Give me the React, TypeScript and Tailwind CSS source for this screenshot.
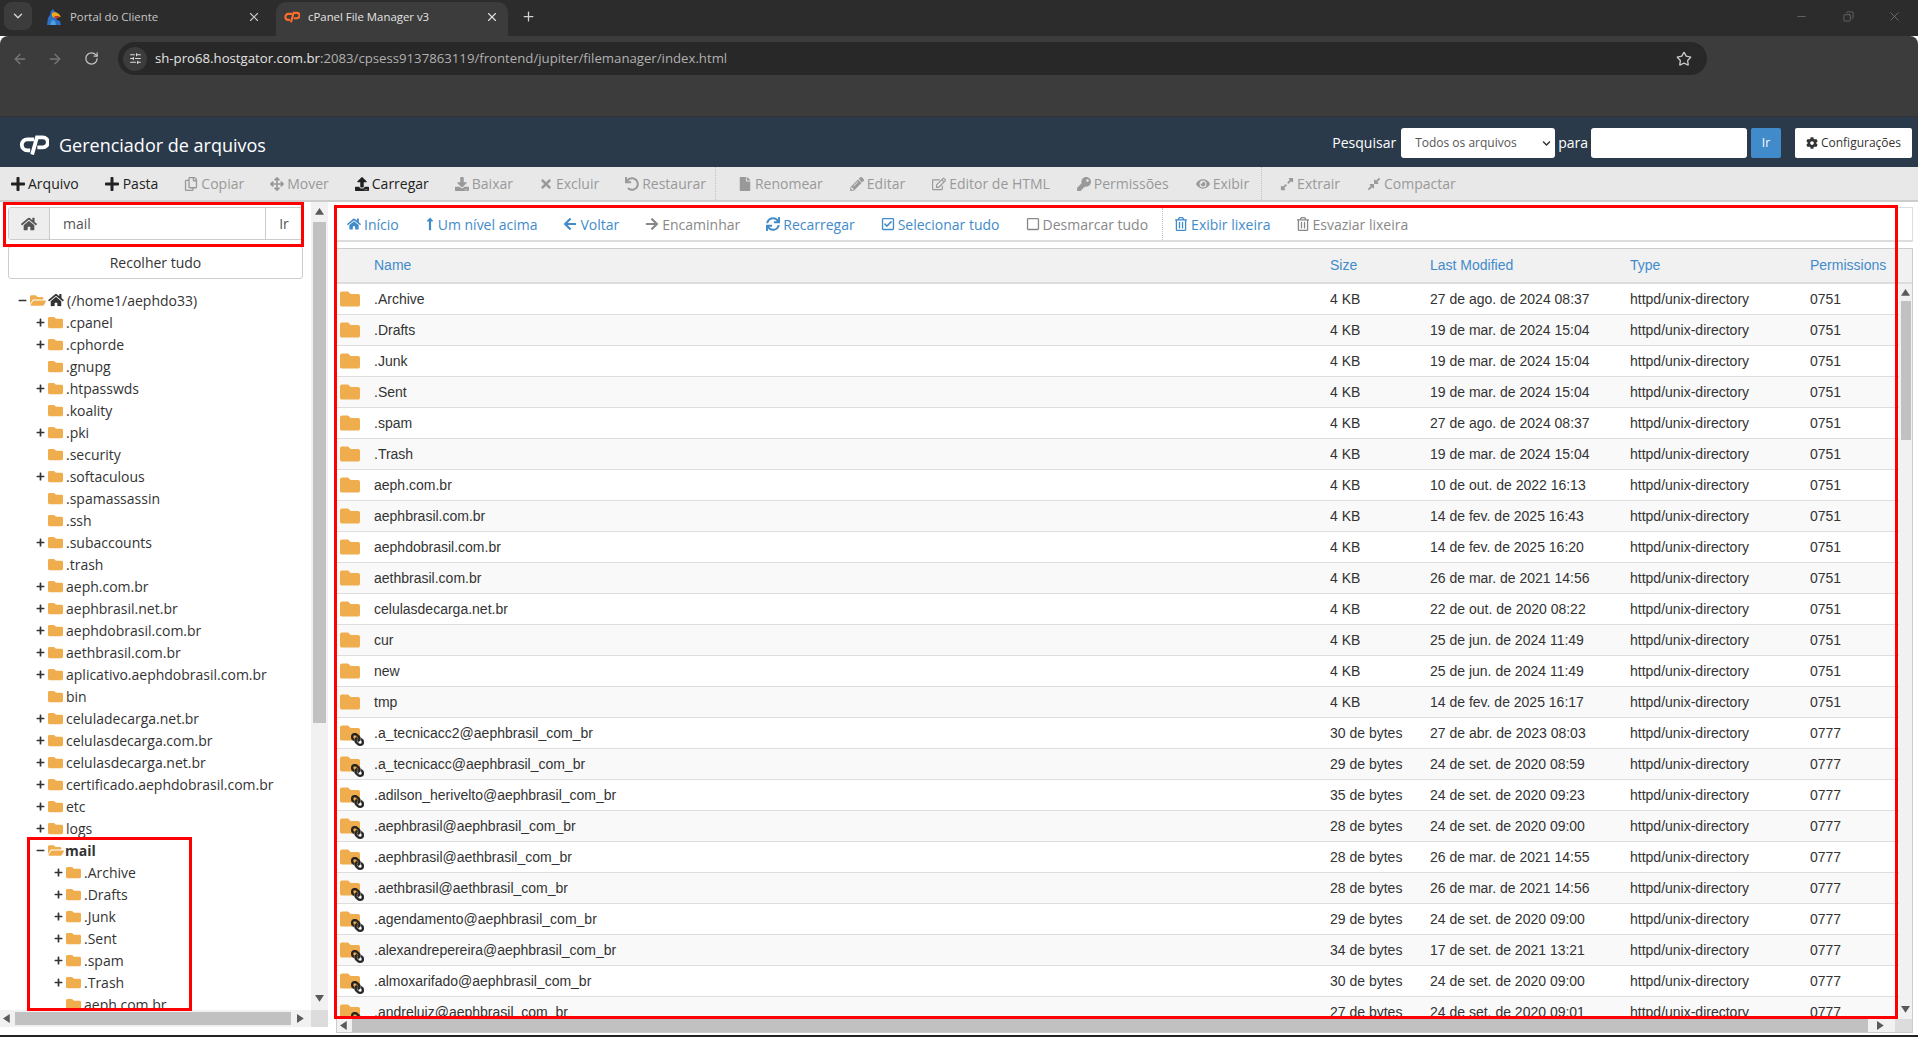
import React from "react";
import {
  FaHome, FaPlus, FaRegCopy, FaArrowsAlt, FaUpload, FaDownload, FaTimes, FaUndo, FaFile, FaPencilAlt, FaRegEdit, FaKey, FaEye,
  FaExpandAlt, FaCompressAlt, FaLongArrowAltUp, FaArrowLeft, FaArrowRight, FaSync, FaRegCheckSquare, FaRegSquare, FaRegTrashAlt,
  FaCog, FaFolder, FaFolderOpen, FaLink, FaMinus, FaChevronDown,
} from "react-icons/fa";
import { ArrowLeft, ArrowRight, RotateCw, Star, X, Plus, Minus, ChevronDown, Copy, SlidersHorizontal } from "lucide-react";

type Ic = React.ComponentType<{ className?: string }>;

const ICON = "w-[14px] h-[14px]";
const PLUS = "w-[16px] h-[16px] -mx-[1px]";

const top1: [Ic, string, boolean, string][] = [
  [FaPlus, "Arquivo", true, PLUS],
  [FaPlus, "Pasta", true, PLUS],
  [FaRegCopy, "Copiar", false, ICON],
  [FaArrowsAlt, "Mover", false, ICON],
  [FaUpload, "Carregar", true, ICON],
  [FaDownload, "Baixar", false, ICON],
  [FaTimes, "Excluir", false, ICON],
  [FaUndo, "Restaurar", false, ICON],
];
const top2: [Ic, string, boolean, string][] = [
  [FaFile, "Renomear", false, ICON],
  [FaPencilAlt, "Editar", false, ICON],
  [FaRegEdit, "Editor de HTML", false, ICON],
  [FaKey, "Permissões", false, ICON],
  [FaEye, "Exibir", false, ICON],
];
const top3: [Ic, string, boolean, string][] = [
  [FaExpandAlt, "Extrair", false, ICON],
  [FaCompressAlt, "Compactar", false, ICON],
];

const nav1: [Ic, string, boolean, string][] = [
  [FaHome, "Início", true, "w-[14px]"],
  [FaLongArrowAltUp, "Um nível acima", true, "w-[10px]"],
  [FaArrowLeft, "Voltar", true, "w-[14px]"],
  [FaArrowRight, "Encaminhar", false, "w-[14px]"],
  [FaSync, "Recarregar", true, "w-[14px]"],
  [FaRegCheckSquare, "Selecionar tudo", true, "w-[14px]"],
  [FaRegSquare, "Desmarcar tudo", false, "w-[14px]"],
];
const nav2: [Ic, string, boolean, string][] = [
  [FaRegTrashAlt, "Exibir lixeira", true, "w-[14px]"],
  [FaRegTrashAlt, "Esvaziar lixeira", false, "w-[14px]"],
];

const tree: [number, boolean, string][] = [
  [1, true, ".cpanel"],
  [1, true, ".cphorde"],
  [1, false, ".gnupg"],
  [1, true, ".htpasswds"],
  [1, false, ".koality"],
  [1, true, ".pki"],
  [1, false, ".security"],
  [1, true, ".softaculous"],
  [1, false, ".spamassassin"],
  [1, false, ".ssh"],
  [1, true, ".subaccounts"],
  [1, false, ".trash"],
  [1, true, "aeph.com.br"],
  [1, true, "aephbrasil.net.br"],
  [1, true, "aephdobrasil.com.br"],
  [1, true, "aethbrasil.com.br"],
  [1, true, "aplicativo.aephdobrasil.com.br"],
  [1, false, "bin"],
  [1, true, "celuladecarga.net.br"],
  [1, true, "celulasdecarga.com.br"],
  [1, true, "celulasdecarga.net.br"],
  [1, true, "certificado.aephdobrasil.com.br"],
  [1, true, "etc"],
  [1, true, "logs"],
];
const mailKids: [number, boolean, string][] = [
  [2, true, ".Archive"],
  [2, true, ".Drafts"],
  [2, true, ".Junk"],
  [2, true, ".Sent"],
  [2, true, ".spam"],
  [2, true, ".Trash"],
  [2, false, "aeph.com.br"],
];

const D = "httpd/unix-directory";
const rows: [string, string, string, string, boolean][] = [
  [".Archive", "4 KB", "27 de ago. de 2024 08:37", "0751", false],
  [".Drafts", "4 KB", "19 de mar. de 2024 15:04", "0751", false],
  [".Junk", "4 KB", "19 de mar. de 2024 15:04", "0751", false],
  [".Sent", "4 KB", "19 de mar. de 2024 15:04", "0751", false],
  [".spam", "4 KB", "27 de ago. de 2024 08:37", "0751", false],
  [".Trash", "4 KB", "19 de mar. de 2024 15:04", "0751", false],
  ["aeph.com.br", "4 KB", "10 de out. de 2022 16:13", "0751", false],
  ["aephbrasil.com.br", "4 KB", "14 de fev. de 2025 16:43", "0751", false],
  ["aephdobrasil.com.br", "4 KB", "14 de fev. de 2025 16:20", "0751", false],
  ["aethbrasil.com.br", "4 KB", "26 de mar. de 2021 14:56", "0751", false],
  ["celulasdecarga.net.br", "4 KB", "22 de out. de 2020 08:22", "0751", false],
  ["cur", "4 KB", "25 de jun. de 2024 11:49", "0751", false],
  ["new", "4 KB", "25 de jun. de 2024 11:49", "0751", false],
  ["tmp", "4 KB", "14 de fev. de 2025 16:17", "0751", false],
  [".a_tecnicacc2@aephbrasil_com_br", "30 de bytes", "27 de abr. de 2023 08:03", "0777", true],
  [".a_tecnicacc@aephbrasil_com_br", "29 de bytes", "24 de set. de 2020 08:59", "0777", true],
  [".adilson_herivelto@aephbrasil_com_br", "35 de bytes", "24 de set. de 2020 09:23", "0777", true],
  [".aephbrasil@aephbrasil_com_br", "28 de bytes", "24 de set. de 2020 09:00", "0777", true],
  [".aephbrasil@aethbrasil_com_br", "28 de bytes", "26 de mar. de 2021 14:55", "0777", true],
  [".aethbrasil@aethbrasil_com_br", "28 de bytes", "26 de mar. de 2021 14:56", "0777", true],
  [".agendamento@aephbrasil_com_br", "29 de bytes", "24 de set. de 2020 09:00", "0777", true],
  [".alexandrepereira@aephbrasil_com_br", "34 de bytes", "17 de set. de 2021 13:21", "0777", true],
  [".almoxarifado@aephbrasil_com_br", "30 de bytes", "24 de set. de 2020 09:00", "0777", true],
  [".andreluiz@aephbrasil_com_br", "27 de bytes", "24 de set. de 2020 09:01", "0777", true],
];

function CpLogo({ className }: { className?: string }) {
  return (
    <svg viewBox="0 0 31 21" className={className} fill="none" stroke="currentColor" strokeWidth="4">
      <path d="M15.5 4.5 H8.5 A5.8 5.8 0 0 0 8.5 16.1 H11.5" />
      <path d="M13.5 20.5 L18.6 2.5 H24.8 A5.2 5.2 0 0 1 24.8 12.9 H19" />
    </svg>
  );
}

function TopItem({ icon: I, label, on, cls }: { icon: Ic; label: string; on: boolean; cls: string }) {
  return (
    <div className={`flex items-center gap-[3px] shrink-0 ${on ? "text-[#222]" : "text-[#999]"}`}>
      <I className={cls} />
      <span>{label}</span>
    </div>
  );
}
function NavItem({ icon: I, label, on, w }: { icon: Ic; label: string; on: boolean; w: string }) {
  return (
    <div className={`flex items-center gap-[3px] shrink-0 ${on ? "text-[#428bca]" : "text-[#888]"}`}>
      <I className={`${w} h-[14px]`} />
      <span>{label}</span>
    </div>
  );
}
function TreeRow({ level, plus, name }: { level: number; plus: boolean; name: string }) {
  return (
    <div className={`flex items-center h-[22px] shrink-0 whitespace-nowrap ${level === 2 ? "pl-[54px]" : "pl-[36px]"}`}>
      <span className="w-[12px] shrink-0 flex items-center">
        {plus && <FaPlus className="w-[9px] h-[9px] text-[#333]" />}
      </span>
      <FaFolder className="w-[15px] h-[15px] text-[#f0ad4e] shrink-0" />
      <span className="ml-[3px] text-[#333]">{name}</span>
    </div>
  );
}
function Arrow({ dir }: { dir: "up" | "down" | "left" | "right" }) {
  const p = { up: "M0 6 L4 0 L8 6Z", down: "M0 0 L8 0 L4 6Z", left: "M6 0 L6 8 L0 4Z", right: "M0 0 L0 8 L6 4Z" }[dir];
  return (
    <svg viewBox="0 0 8 8" className="w-[9px] h-[9px] text-[#5a5a5a] shrink-0" fill="currentColor">
      <path d={p} />
    </svg>
  );
}

export default function App() {
  return (
    <div className="relative w-[1918px] h-[1037px] overflow-hidden bg-white flex flex-col text-[14px] text-[#333] [font-family:'Open_Sans',sans-serif]">
      {/* browser tab strip */}
      <div className="h-[36px] bg-[#2c2c2c] flex items-start shrink-0 text-[11.4px] text-[#c7c7c7]">
        <div className="ml-[4px] mt-[2px] w-[28px] h-[28px] rounded-[8px] bg-[#3c3c3c] flex items-center justify-center">
          <ChevronDown className="w-[14px] h-[14px] text-[#d0d0d0]" strokeWidth={2.5} />
        </div>
        <div className="ml-[14px] w-[230px] h-[30px] mt-[2px] flex items-center shrink-0">
          <svg viewBox="0 0 16 16" className="w-[16px] h-[16px] shrink-0">
            <path d="M1 16 L2 9 L4 6 L5 2 L7 0 L9 3 L12 4 L12 7 L9 8 L11 11 L14 12 L15 16Z" fill="#2f6fc4" />
            <path d="M6 4 L9 3 L13 5 L15 8 L10 7 L8 9 L6 7Z" fill="#f2a71b" />
            <path d="M8 7 L14 8 L10 10Z" fill="#d8342a" />
            <path d="M4 16 L6 11 L9 12 L10 16Z" fill="#4aa3df" />
          </svg>
          <span className="ml-[8px]">Portal do Cliente</span>
          <X className="ml-auto mr-[15px] w-[14px] h-[14px] text-[#c7c7c7]" />
        </div>
        <div className="w-[232px] h-[34px] mt-[2px] bg-[#3c3c3c] rounded-t-[10px] flex items-start pl-[8px] shrink-0 text-[#e3e3e3]">
          <div className="h-[30px] w-full flex items-center">
            <CpLogo className="w-[16px] h-[12px] text-[#ff6c2c] shrink-0" />
            <span className="ml-[8px]">cPanel File Manager v3</span>
            <X className="ml-auto mr-[9px] w-[14px] h-[14px] text-[#dcdcdc]" />
          </div>
        </div>
        <Plus className="ml-[13px] mt-[9px] w-[15px] h-[15px] text-[#d0d0d0]" />
        <div className="ml-auto flex items-center h-[33px] text-[#8d8d8d]">
          <Minus className="w-[13px] h-[13px] mr-[35px]" strokeWidth={1} />
          <Copy className="w-[11px] h-[11px] mr-[33px] -scale-x-100" strokeWidth={1.2} />
          <X className="w-[15px] h-[15px] mr-[16px]" strokeWidth={1} />
        </div>
      </div>
      {/* browser toolbar */}
      <div className="h-[81px] bg-[#3c3c3c] border-b border-[#333] rounded-t-[8px] shrink-0 flex items-start pt-[6px]">
        <ArrowLeft className="ml-[12px] mt-[9px] w-[16px] h-[16px] text-[#777]" />
        <ArrowRight className="ml-[19px] mt-[9px] w-[16px] h-[16px] text-[#777]" />
        <RotateCw className="ml-[21px] mt-[9px] w-[15px] h-[15px] text-[#c4c4c4]" />
        <div className="ml-[19px] w-[1589px] h-[33px] rounded-full bg-[#282828] flex items-center pl-[5px] text-[13.2px]">
          <div className="w-[24px] h-[24px] rounded-full bg-[#3c3c3c] flex items-center justify-center">
            <SlidersHorizontal className="w-[13px] h-[13px] text-[#dcdcdc]" />
          </div>
          <span className="ml-[8px] text-[#e3e3e3] whitespace-nowrap">
            sh-pro68.hostgator.com.br<span className="text-[#b0b0b0]">:2083/cpsess9137863119/frontend/jupiter/filemanager/index.html</span>
          </span>
          <Star className="ml-auto mr-[15px] w-[16px] h-[16px] text-[#c7c7c7]" />
        </div>
      </div>
      {/* cPanel header */}
      <div className="h-[50px] bg-[#2a3a4b] shrink-0 flex items-center pl-[19px] pr-[6px] text-white">
        <CpLogo className="w-[30px] h-[20px] shrink-0 mt-[6px] text-white" />
        <span className="ml-[10px] mt-[6px] text-[18px] leading-none">Gerenciador de arquivos</span>
        <div className="ml-auto flex items-center mt-[2px]">
          <span className="mr-[5px] -mt-[2px]">Pesquisar</span>
          <div className="w-[154px] h-[30px] bg-white rounded-[3px] flex items-center pl-[14px] pr-[4px] text-[12px] text-[#555]">
            <span>Todos os arquivos</span>
            <FaChevronDown className="ml-auto w-[9px] h-[9px] text-[#333]" />
          </div>
          <span className="mx-[3px] -mt-[2px]">para</span>
          <div className="w-[156px] h-[30px] bg-white rounded-[3px]" />
          <div className="ml-[4px] w-[30px] h-[30px] bg-[#428bca] rounded-[2px] flex items-center justify-center text-[12px]">Ir</div>
          <div className="ml-[14px] w-[117px] h-[30px] bg-white rounded-[2px] flex items-center justify-center text-[12px] text-[#333]">
            <FaCog className="w-[12px] h-[12px] mr-[3px]" />
            Configurações
          </div>
        </div>
      </div>
      {/* action toolbar */}
      <div className="h-[35px] bg-[#e8e8e8] border-b-2 border-[#ccc] shrink-0 flex items-center pl-[11px] whitespace-nowrap">
        <div className="flex items-center gap-[26px]">
          {top1.map(([i, l, o, c], n) => <TopItem key={l} icon={i} label={l} on={o} cls={n === 1 ? `${PLUS} mr-[0px]` : c} />)}
        </div>
        <div className="h-full ml-[9px] mr-[22px] border-l border-dotted border-[#c4c4c4]" />
        <div className="flex items-center gap-[27px]">
          {top2.map(([i, l, o, c]) => <TopItem key={l} icon={i} label={l} on={o} cls={c} />)}
        </div>
        <div className="h-full ml-[12px] mr-[18px] border-l border-dotted border-[#c4c4c4]" />
        <div className="flex items-center gap-[27px]">
          {top3.map(([i, l, o, c]) => <TopItem key={l} icon={i} label={l} on={o} cls={c} />)}
        </div>
      </div>
      {/* main */}
      <div className="flex-1 min-h-0 flex items-start">
        {/* sidebar */}
        <div className="w-[328px] h-[825px] shrink-0 flex flex-col">
          <div className="flex-1 min-h-0 flex">
            <div className="w-[311px] shrink-0 overflow-hidden flex flex-col">
              <div className="mx-[8px] mt-[5px] h-[33px] shrink-0 border border-[#ccc] rounded-[3px] flex">
                <div className="w-[41px] bg-[#eee] border-r border-[#ccc] flex items-center justify-center rounded-l-[3px]">
                  <FaHome className="w-[16px] h-[16px] text-[#555]" />
                </div>
                <div className="flex-1 flex items-center pl-[13px] text-[#555]">mail</div>
                <div className="w-[37px] border-l border-[#ccc] flex items-center justify-center text-[#555]">Ir</div>
              </div>
              <div className="mx-[8px] mt-[6px] h-[33px] shrink-0 border border-[#ccc] rounded-[3px] flex items-center justify-center">Recolher tudo</div>
              <div className="mt-[10px] flex flex-col">
                <div className="flex items-center h-[22px] shrink-0 pl-[18px] whitespace-nowrap">
                  <FaMinus className="w-[9px] h-[9px] text-[#333] shrink-0" />
                  <FaFolderOpen className="ml-[3px] w-[16px] h-[15px] text-[#f0ad4e] shrink-0" />
                  <FaHome className="ml-[2px] w-[16px] h-[14px] text-[#333] shrink-0" />
                  <span className="ml-[3px]">(/home1/aephdo33)</span>
                </div>
                {tree.map(([lv, p, n]) => <TreeRow key={n} level={lv} plus={p} name={n} />)}
                <div className="flex items-center h-[22px] shrink-0 pl-[36px]">
                  <FaMinus className="w-[9px] h-[9px] text-[#333] shrink-0" />
                  <FaFolderOpen className="ml-[3px] w-[16px] h-[15px] text-[#f0ad4e] shrink-0" />
                  <b className="ml-[1px] font-bold">mail</b>
                </div>
                {mailKids.map(([lv, p, n]) => <TreeRow key={n} level={lv} plus={p} name={n} />)}
              </div>
            </div>
            <div className="w-[17px] shrink-0 bg-[#f1f1f1] flex flex-col items-center px-[2px] pt-[6px] pb-[6px]">
              <Arrow dir="up" />
              <div className="w-full h-[501px] mt-[5px] bg-[#c1c1c1]" />
              <div className="flex-1" />
              <Arrow dir="down" />
            </div>
          </div>
          <div className="h-[17px] shrink-0 bg-[#f1f1f1] flex items-center">
            <div className="w-[15px] flex justify-center"><Arrow dir="left" /></div>
            <div className="w-[276px] h-[13px] bg-[#c1c1c1]" />
            <div className="w-[20px] flex justify-center"><Arrow dir="right" /></div>
            <div className="w-[17px] h-full bg-[#dcdcdc]" />
          </div>
        </div>
        {/* content */}
        <div className="ml-[8px] flex-1 min-w-0 h-[831px] pr-[5px] flex flex-col">
          <div className="mt-[5px] h-[35px] shrink-0 border border-[#ddd] border-b-2 flex items-center pl-[10px] whitespace-nowrap bg-white">
            <div className="flex items-center gap-[26px]">
              {nav1.map(([i, l, o, w]) => <NavItem key={l} icon={i} label={l} on={o} w={w} />)}
            </div>
            <div className="h-full ml-[14px] mr-[11px] border-l border-dotted border-[#c4c4c4]" />
            <div className="flex items-center gap-[25px]">
              {nav2.map(([i, l, o, w]) => <NavItem key={l} icon={i} label={l} on={o} w={w} />)}
            </div>
          </div>
          <div className="mt-[6px] flex-1 min-h-0 border border-[#ccc] flex flex-col [font-family:'Liberation_Sans',sans-serif]">
            <div className="h-[35px] shrink-0 bg-[#f1f1f1] border-b-2 border-[#ddd] flex items-center text-[#428bca]">
              <span className="ml-[37px] w-[956px]">Name</span>
              <span className="w-[100px]">Size</span>
              <span className="w-[200px]">Last Modified</span>
              <span className="w-[180px]">Type</span>
              <span>Permissions</span>
            </div>
            <div className="flex-1 min-h-0 flex">
              <div className="flex-1 min-w-0 overflow-hidden">
                {rows.map(([n, s, m, p, link], i) => (
                  <div key={n} className={`h-[31px] flex items-center border-b border-[#ddd] text-[#333] ${i % 2 ? "bg-[#f9f9f9]" : "bg-white"}`}>
                    <div className="relative ml-[3px] w-[20px] h-[20px] shrink-0">
                      <FaFolder className="w-[20px] h-[20px] text-[#f0ad4e]" />
                      {link && <FaLink className="absolute -right-[4px] -bottom-[3px] w-[13px] h-[13px] text-[#222] -scale-x-100 stroke-current stroke-[24px]" />}
                    </div>
                    <span className="ml-[14px] w-[956px] shrink-0 whitespace-nowrap">{n}</span>
                    <span className="w-[100px] shrink-0">{s}</span>
                    <span className="w-[200px] shrink-0">{m}</span>
                    <span className="w-[180px] shrink-0">{D}</span>
                    <span>{p}</span>
                  </div>
                ))}
              </div>
              <div className="w-[13px] shrink-0 bg-[#f1f1f1] flex flex-col items-center pt-[5px] pb-[4px]">
                <Arrow dir="up" />
                <div className="w-[10px] h-[139px] mt-[3px] bg-[#c1c1c1]" />
                <div className="flex-1" />
                <Arrow dir="down" />
              </div>
            </div>
            <div className="h-[13px] shrink-0 bg-[#f1f1f1] flex items-center">
              <div className="w-[15px] flex justify-center"><Arrow dir="left" /></div>
              <div className="flex-1 h-full bg-[#c1c1c1]" />
              <div className="w-[27px] flex justify-center"><Arrow dir="right" /></div>
              <div className="w-[17px] h-full bg-[#dcdcdc]" />
            </div>
          </div>
        </div>
      </div>
      {/* annotation boxes */}
      <div className="absolute left-[3px] top-[202px] w-[301px] h-[45px] border-[3px] border-[#ff0000] pointer-events-none" />
      <div className="absolute left-[27px] top-[837px] w-[165px] h-[174px] border-[3px] border-[#ff0000] pointer-events-none" />
      <div className="absolute left-[334px] top-[205px] w-[1564px] h-[814px] border-[3px] border-[#ff0000] pointer-events-none" />
      <div className="absolute left-0 right-0 bottom-0 h-[2px] bg-[#222]" />
    </div>
  );
}
